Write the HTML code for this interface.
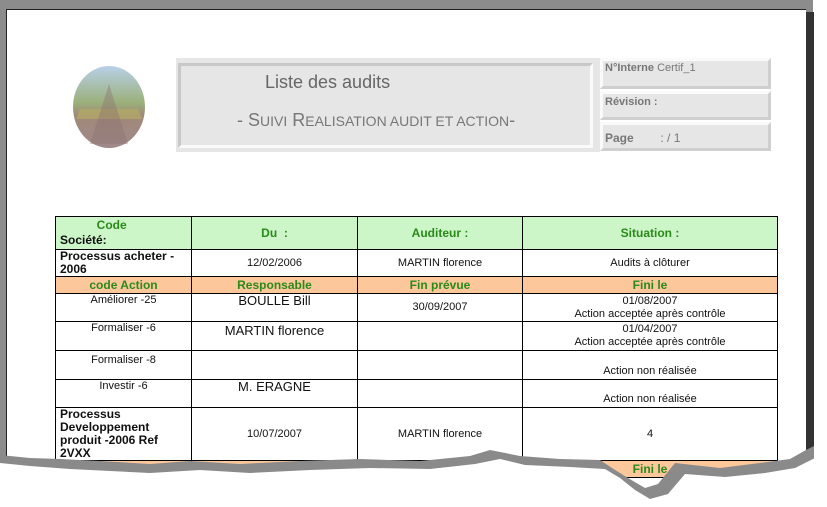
<!DOCTYPE html>
<html><head><meta charset="utf-8"><style>
*{margin:0;padding:0;box-sizing:border-box}
body{width:827px;height:507px;background:#fff;position:relative;overflow:hidden;font-family:"Liberation Sans",sans-serif}
.a{position:absolute}
.frame{left:0;top:0;width:813px;height:470px;background:#8c8c8c}
.sh{left:806px;top:12px;width:8px;height:458px;background:#333}
.page{left:6px;top:9px;width:800px;height:461px;background:#fff;border-left:1px solid #222;border-top:1px solid #222}
.gbox{background:#e6e6e6}
.bev{border:3px solid;border-color:#fafafa #cfcfcf #cfcfcf #fafafa}
.bev2{border:3px solid;border-color:#c8c8c8 #fafafa #fafafa #c8c8c8}
table{border-collapse:collapse;position:absolute;left:55px;top:216px;width:722px;table-layout:fixed}
td{border:1px solid #000;font-size:11px;text-align:center;vertical-align:middle;color:#111;padding:0 4px;line-height:13px}
.hg td{background:#ccf5c8;color:#2a8a1a;font-weight:bold;font-size:12px}
.ho td{background:#fcc79a;color:#2a8a1a;font-weight:bold;font-size:12px;height:17px}
.b{font-weight:bold;text-align:left;font-size:12px}
.t{vertical-align:top}
</style></head><body>
<div class="a frame"></div>
<div class="a sh"></div>
<div class="a page"></div>
<svg class="a" style="left:70px;top:64px" width="78" height="86"><defs><linearGradient id="g" x1="0" y1="0" x2="0" y2="1"><stop offset="0" stop-color="#b8d0e8"/><stop offset=".45" stop-color="#9bb07a"/><stop offset=".6" stop-color="#a08878"/><stop offset="1" stop-color="#a08a8a"/></linearGradient></defs><ellipse cx="39" cy="43" rx="36" ry="41" fill="url(#g)"/><path d="M10 45 L68 45 L72 55 L6 55Z" fill="#b8b060" opacity=".6"/><path d="M39 20 L20 80 L58 80Z" fill="#8a7070" opacity=".4"/></svg>
<div class="a gbox" style="left:176px;top:58px;width:424px;height:94px"></div>
<div class="a gbox bev2" style="left:178px;top:63px;width:415px;height:85px"></div>
<div class="a" style="left:265px;top:72px;font-size:18px;color:#666">Liste des audits</div>
<div class="a" style="left:237px;top:110px;font-size:18px;color:#777">- S<span style="font-size:14px">UIVI</span> R<span style="font-size:14px">EALISATION AUDIT ET ACTION</span>-</div>
<div class="a gbox bev" style="left:600px;top:58px;width:171px;height:31px;font-size:11px;color:#777;padding:1px 2px"><b>N°Interne</b> Certif_1</div>
<div class="a gbox bev" style="left:600px;top:91px;width:171px;height:29px;font-size:11px;color:#777;padding:2px 2px"><b>Révision :</b></div>
<div class="a gbox bev" style="left:600px;top:122px;width:171px;height:29px;font-size:12px;color:#777;padding:6px 2px"><b>Page</b>&nbsp;&nbsp;&nbsp;&nbsp;&nbsp;&nbsp;&nbsp; : / 1</div>
<table>
<colgroup><col style="width:136px"><col style="width:166px"><col style="width:165px"><col style="width:255px"></colgroup>
<tr class="hg" style="height:33px"><td style="line-height:15px;text-align:left">&nbsp;&nbsp;&nbsp;&nbsp;&nbsp;&nbsp;&nbsp;&nbsp;&nbsp;&nbsp;&nbsp;Code<br><span style="color:#111">Société:</span></td><td>Du &nbsp;:</td><td>Auditeur :</td><td>Situation :</td></tr>
<tr style="height:26px"><td class="b">Processus acheter - 2006</td><td>12/02/2006</td><td>MARTIN florence</td><td>Audits à clôturer</td></tr>
<tr class="ho"><td>code Action</td><td>Responsable</td><td>Fin prévue</td><td>Fini le</td></tr>
<tr style="height:28px"><td class="t">Améliorer -25</td><td class="t" style="font-size:13px">BOULLE Bill</td><td>30/09/2007</td><td>01/08/2007<br>Action acceptée après contrôle</td></tr>
<tr style="height:29px"><td class="t">Formaliser -6</td><td class="t" style="font-size:13px;padding-top:2px">MARTIN florence</td><td></td><td>01/04/2007<br>Action acceptée après contrôle</td></tr>
<tr style="height:29px"><td class="t" style="padding-top:3px">Formaliser -8</td><td></td><td></td><td style="vertical-align:bottom;padding-bottom:1px">Action non réalisée</td></tr>
<tr style="height:28px"><td class="t">Investir -6</td><td class="t" style="font-size:13px">M. ERAGNE</td><td></td><td style="vertical-align:bottom;padding-bottom:1px">Action non réalisée</td></tr>
<tr style="height:52px"><td class="b" style="padding-right:14px">Processus Developpement produit -2006 Ref 2VXX</td><td>10/07/2007</td><td>MARTIN florence</td><td>4</td></tr>
<tr class="ho"><td></td><td></td><td></td><td>Fini le</td></tr>
</table>
<svg class="a" style="left:0;top:0" width="827" height="507">
<path d="M0 455 L30 458 L60 459 L100 461 L150 464 L190 461 L240 464 L300 461 L360 459 L420 461 L470 456 L490 450 L520 456 L560 459 L600 460 L612 468 L628 478 L645 488 L658 484 L675 463 L720 468 L760 463 L790 459 L806 450 L814 446 L814 507 L0 507Z" fill="#8a8a8a"/>
<path d="M0 463 L30 466 L70 469 L110 471 L150 473 L200 470 L250 473 L310 470 L370 468 L430 469 L475 464 L500 459 L525 465 L570 467 L605 469 L620 478 L635 490 L650 499 L668 494 L685 474 L725 477 L765 473 L795 468 L815 458 L827 450 L827 507 L0 507Z" fill="#fff"/>
<rect x="814" y="440" width="13" height="30" fill="#fff"/>
</svg>
</body></html>
